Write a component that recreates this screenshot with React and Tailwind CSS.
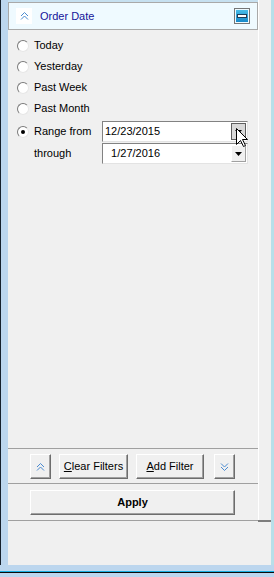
import React from "react";

function DoubleChevron({ down = false, className = "" }) {
  // two small stacked chevrons, dotted blue like the classic WinForms glyph
  return (
    <svg width="9" height="8" viewBox="0 0 9 8" className={className}>
      <g
        fill="none"
        stroke="#4a8ad0"
        strokeWidth="1"
        transform={down ? "rotate(180 4.5 4)" : undefined}
      >
        <polyline points="1,4 4.5,0.5 8,4" />
        <polyline points="1,7.5 4.5,4 8,7.5" />
      </g>
    </svg>
  );
}

function Radio({ checked = false }) {
  return (
    <div className="w-[12px] h-[12px] rounded-full border border-t-[#7a7a7a] border-l-[#7a7a7a] border-r-[#e6e6e6] border-b-[#e6e6e6] bg-white flex items-center justify-center shrink-0">
      {checked && <div className="w-[4px] h-[4px] rounded-full bg-black" />}
    </div>
  );
}

function DropArrow() {
  return (
    <svg width="7" height="4" viewBox="0 0 7 4">
      <polygon points="0,0 7,0 3.5,4" fill="#000" />
    </svg>
  );
}

function DateBox({ value, pressed = false }) {
  return (
    <div className="w-[146px] h-[21px] flex items-center border border-t-[#828282] border-l-[#828282] border-r-[#e3e3e3] border-b-[#e3e3e3] bg-white">
      <span className="flex-1 pl-[2px] whitespace-pre text-black">{value}</span>
      <div
        className={
          pressed
            ? "w-[15px] h-[17px] mr-px flex items-center justify-center bg-[#d9d9d9] border border-[#5f5f5f]"
            : "w-[15px] h-[17px] mr-px flex items-center justify-center bg-[#f0f0f0] border border-t-white border-l-white border-r-[#a0a0a0] border-b-[#a0a0a0]"
        }
      >
        <DropArrow />
      </div>
    </div>
  );
}

function Button({ className = "", children }) {
  return (
    <div
      className={
        "h-[25px] flex items-center justify-center bg-[#f0f0f0] border border-t-white border-l-white border-r-[#6d6d6d] border-b-[#6d6d6d] shadow-[inset_-1px_-1px_0_#a0a0a0] text-black " +
        className
      }
    >
      {children}
    </div>
  );
}

const options = ["Today", "Yesterday", "Past Week", "Past Month"];

export default function App() {
  return (
    <div className="w-[274px] h-[577px] flex flex-col bg-[#bcd6ee] font-['Liberation_Sans',Arial,sans-serif] text-[11px] relative overflow-hidden">
      <div className="flex h-[565px]">
        <div className="w-px bg-[#16202c]" />
        <div className="w-[7px]" />
        <div className="flex-1 flex flex-col bg-[#f0f0f0]">
          <div className="flex h-[520px]">
            {/* filter panel */}
            <div className="w-[250px] flex flex-col">
              <div className="h-[2px] bg-[#c6e0f0]" />
              <div className="h-[28px] flex items-center border border-[#a9a9a9] bg-[#effaff]">
                <div className="ml-[7px] w-[16px] h-[16px] bg-white flex items-center justify-center">
                  <DoubleChevron />
                </div>
                <span className="ml-[8px] flex-1 text-[#14149a]">Order Date</span>
                <div className="mr-[7px] w-[16px] h-[16px] border border-[#767676] p-px">
                  <div className="w-full h-full bg-gradient-to-b from-[#47bde9] to-[#1689c9] flex items-center justify-center">
                    <div className="w-[10px] h-[4px] bg-white border border-[#1d3d58]" />
                  </div>
                </div>
              </div>

              <div className="pt-[5px] pl-[9px] flex flex-col">
                {options.map((o) => (
                  <div key={o} className="h-[21px] flex items-center gap-[5px]">
                    <Radio />
                    <span className="text-black">{o}</span>
                  </div>
                ))}
                <div className="mt-[2px] h-[21px] flex items-center">
                  <div className="w-[85px] flex items-center gap-[5px]">
                    <Radio checked />
                    <span className="text-black">Range from</span>
                  </div>
                  <DateBox value="12/23/2015" pressed />
                </div>
                <div className="mt-px h-[21px] flex items-center">
                  <div className="w-[85px] pl-[17px] text-black">through</div>
                  <DateBox value="  1/27/2016" />
                </div>
              </div>

              <div className="flex-1" />

              <div className="h-px bg-[#a0a0a0]" />
              <div className="pt-[5px] pl-[22px] flex">
                <Button className="w-[21px]">
                  <DoubleChevron />
                </Button>
                <Button className="w-[69px] ml-[8px]">
                  <span>
                    <span className="underline">C</span>lear Filters
                  </span>
                </Button>
                <Button className="w-[68px] ml-[8px]">
                  <span>
                    <span className="underline">A</span>dd Filter
                  </span>
                </Button>
                <Button className="w-[21px] ml-[10px]">
                  <DoubleChevron down />
                </Button>
              </div>
              <div className="mt-[4px] h-px bg-[#a0a0a0]" />
              <div className="pt-[6px] pb-[5px] pl-[22px] flex">
                <Button className="w-[205px] font-bold">Apply</Button>
              </div>
            </div>
            <div className="w-px bg-white" />
            <div className="flex-1" />
          </div>
          <div className="flex h-[2px]">
            <div className="w-[250px] h-px bg-[#a0a0a0]" />
            <div className="flex-1 bg-[#7d7d7d]" />
          </div>
          <div className="flex-1" />
        </div>
        <div className="w-[3px] bg-[#b8dfe9]" />
      </div>
      <div className="h-[6px]" />
      <div className="h-px bg-[#19aee0]" />
      <div className="h-px bg-[#0b0b0b]" />
      <div className="flex-1 bg-[#bcd6ee]" />

      {/* mouse pointer hovering the first date drop-down */}
      <svg
        width="13"
        height="20"
        viewBox="0 0 13 20"
        className="absolute left-[236px] top-[128px]"
      >
        <polygon
          points="0.5,0.5 0.5,16.5 4.5,12.5 7.5,18.5 9.5,17.5 6.5,11.5 11.5,11.5"
          fill="#fff"
          stroke="#000"
          strokeWidth="1"
          strokeLinejoin="miter"
        />
      </svg>
    </div>
  );
}
